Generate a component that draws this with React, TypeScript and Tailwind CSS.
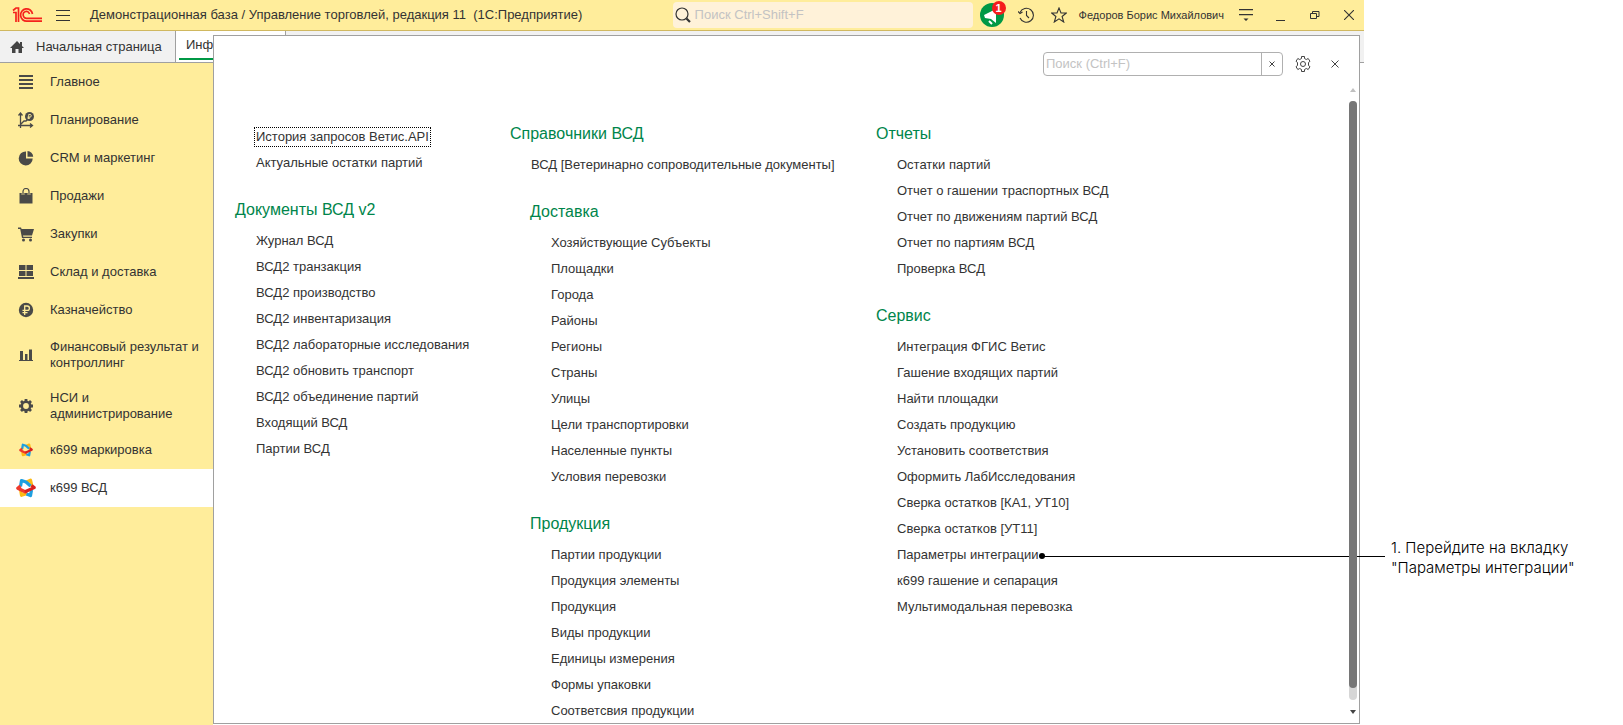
import React from "react";

type Group = { title?: string; items: string[]; sub?: boolean };

const columns: Group[][] = [
  [
    { items: ["История запросов Ветис.API", "Актуальные остатки партий"] },
    {
      title: "Документы ВСД v2",
      items: [
        "Журнал ВСД", "ВСД2 транзакция", "ВСД2 производство", "ВСД2 инвентаризация",
        "ВСД2 лабораторные исследования", "ВСД2 обновить транспорт",
        "ВСД2 объединение партий", "Входящий ВСД", "Партии ВСД",
      ],
    },
  ],
  [
    { title: "Справочники ВСД", items: ["ВСД [Ветеринарно сопроводительные документы]"] },
    {
      title: "Доставка", sub: true,
      items: [
        "Хозяйствующие Субъекты", "Площадки", "Города", "Районы", "Регионы", "Страны",
        "Улицы", "Цели транспортировки", "Населенные пункты", "Условия перевозки",
      ],
    },
    {
      title: "Продукция", sub: true,
      items: [
        "Партии продукции", "Продукция элементы", "Продукция", "Виды продукции",
        "Единицы измерения", "Формы упаковки", "Соответсвия продукции",
      ],
    },
  ],
  [
    {
      title: "Отчеты",
      items: [
        "Остатки партий", "Отчет о гашении траспортных ВСД", "Отчет по движениям партий ВСД",
        "Отчет по партиям ВСД", "Проверка ВСД",
      ],
    },
    {
      title: "Сервис",
      items: [
        "Интеграция ФГИС Ветис", "Гашение входящих партий", "Найти площадки",
        "Создать продукцию", "Установить соответствия", "Оформить ЛабИсследования",
        "Сверка остатков [КА1, УТ10]", "Сверка остатков [УТ11]", "Параметры интеграции",
        "к699 гашение и сепарация", "Мультимодальная перевозка",
      ],
    },
  ],
];

function Knot({ className }: { className: string }) {
  return (
    <svg viewBox="0 0 20 20" className={className} fill="none" strokeWidth="3.2" strokeLinejoin="round" aria-hidden="true">
      <path d="M9.500 4.500 14.500 2.200 16 8.500" stroke="#fdb913" />
      <path d="M4.500 11 5.500 17.300 11 15.500" stroke="#fdb913" />
      <path d="M4.500 8.500 5.500 2.500 10 4 14.500 8" stroke="#1e9fe0" />
      <path d="M10.500 16 14.500 17.600 15.500 12" stroke="#1e9fe0" />
      <path d="M4.500 8 1.800 10.200 9 13.800 11 13.500" stroke="#ee3a2c" />
      <path d="M9 13.800 18.200 9.600 15.500 7.500" stroke="#d9211f" />
    </svg>
  );
}

const svg = "size-4 shrink-0";
const icons = {
  main: <svg viewBox="0 0 16 16" className={svg} fill="#4a4a48"><path d="M1 1h14v2H1zM1 5h14v2H1zM1 9h14v2H1zM1 13h14v2H1z" /></svg>,
  plan: (
    <svg viewBox="0 0 16 16" className={svg} fill="none" stroke="#4a4a48">
      <path d="M2.500 16V1M.5 3.500l2-2.500 2 2.500M0 13.500h14M12 11.500l2.500 2-2.500 2M3 12l3-3h2l2-2" strokeWidth="1.300" />
      <circle cx="11.500" cy="4.500" r="4.500" fill="#4a4a48" stroke="none" />
      <path d="M10.700 7V2.500h1.300a1.300 1.300 0 0 1 0 2.600H9.500M9.500 6.200h2.500" stroke="#ffed9b" strokeWidth=".9" />
    </svg>
  ),
  pie: <svg viewBox="0 0 16 16" className={svg} fill="#4a4a48"><path d="M8 1.500V8.500H14.700A7 7 0 1 1 8 1.500ZM9.500 1a6 6 0 0 1 5.700 5.700H9.500Z" /></svg>,
  bag: <svg viewBox="0 0 16 16" className={svg}><path d="M1.500 5h13v10.500h-13z" fill="#4a4a48" /><path d="M5 7V3.500a3 3 0 0 1 6 0V7" fill="none" stroke="#ffed9b" strokeWidth="2.600" /><path d="M5 7V3.500a3 3 0 0 1 6 0V7" fill="none" stroke="#4a4a48" strokeWidth="1.200" /></svg>,
  cart: <svg viewBox="0 0 16 16" className={svg} fill="#4a4a48"><path d="M0 1.500h3l.6 1.500H16l-2 6.500H5l.3 1.200H14V12H4L2.200 3H0z" /><circle cx="5.500" cy="14" r="1.500" /><circle cx="12.500" cy="14" r="1.500" /></svg>,
  stock: <svg viewBox="0 0 16 16" className={svg} fill="#4a4a48"><path d="M1 1h6.500v5H1zM8.500 1H15v5H8.500zM1 7h6.500v5H1zM8.500 7H15v5H8.500zM0 13h16v2H0z" /></svg>,
  money: <svg viewBox="0 0 16 16" className={svg}><circle cx="8" cy="8" r="7.200" fill="#4a4a48" /><path d="M6.700 13V4h2.500a2.200 2.200 0 0 1 0 4.400H4.500M4.500 10.600h5" fill="none" stroke="#ffed9b" strokeWidth="1.300" /></svg>,
  bars: <svg viewBox="0 0 16 16" className={svg} fill="#4a4a48"><path d="M2 4h3v9H2zM7 7h2.500v6H7zM11 2.500h3V13h-3zM1 13h14v1H1z" /></svg>,
  gear: (
    <svg viewBox="0 0 16 16" className={svg} fill="none" stroke="#4a4a48">
      <circle cx="8" cy="8" r="4.200" strokeWidth="2.600" />
      <path d="M8 1v2M8 13v2M1 8h2M13 8h2M3 3l1.500 1.500M11.500 11.500 13 13M3 13l1.500-1.500M11.500 4.500 13 3" strokeWidth="2.800" />
    </svg>
  ),
};

const sections: { label: string; icon: React.ReactNode; tall?: boolean; active?: boolean }[] = [
  { label: "Главное", icon: icons.main },
  { label: "Планирование", icon: icons.plan },
  { label: "CRM и маркетинг", icon: icons.pie },
  { label: "Продажи", icon: icons.bag },
  { label: "Закупки", icon: icons.cart },
  { label: "Склад и доставка", icon: icons.stock },
  { label: "Казначейство", icon: icons.money },
  { label: "Финансовый результат и контроллинг", icon: icons.bars, tall: true },
  { label: "НСИ и администрирование", icon: icons.gear, tall: true },
  { label: "к699 маркировка", icon: <Knot className="size-3.5" /> },
  { label: "к699 ВСД", icon: <Knot className="size-5" />, active: true },
];

function TitleBar() {
  return (
    <header className="flex h-[31px] shrink-0 items-center border-b border-[#d0b860] bg-[#ffed9b] pr-2.5">
      <svg viewBox="0 0 30 16" className="ml-3 h-4 w-[30px] shrink-0" fill="none" stroke="#f5221c" strokeWidth="1.700" role="img" aria-label="1С">
        <path d="M1 5.500h3V15M1 3.500 4 1h2.500v14" />
        <path d="M20.500 7A6 6.200 0 1 0 15 14.200h15" />
        <path d="M17.500 7A3.200 3.500 0 1 0 15 11.300h15" />
      </svg>
      <button aria-label="Меню" className="ml-3.5 flex h-[11px] w-3.5 shrink-0 flex-col justify-between">
        <span className="h-px w-full bg-[#333]" /><span className="h-px w-full bg-[#333]" /><span className="h-px w-full bg-[#333]" />
      </button>
      <h1 className="ml-5 text-[13px] whitespace-pre">Демонстрационная база / Управление торговлей, редакция 11  (1С:Предприятие)</h1>
      <label className="ml-auto flex h-[26px] w-[300px] items-center rounded-sm bg-[#fff2d9] pl-0.5">
        <svg viewBox="0 0 16 16" className="size-4 shrink-0" fill="none" stroke="#333"><circle cx="7" cy="7" r="6" strokeWidth="1.200" /><path d="m11.500 11.500 3.500 3.500" strokeWidth="2.200" /></svg>
        <input aria-label="Поиск" placeholder="Поиск Ctrl+Shift+F" className="ml-1 min-w-0 flex-1 bg-transparent text-[13px] outline-none placeholder:text-[#c3c3c3]" />
      </label>
      <button aria-label="Уведомления" className="relative ml-[7px] size-6 shrink-0">
        <svg viewBox="0 0 24 24" className="size-6"><circle cx="12" cy="12" r="12" fill="#009845" /><path d="M4 12 16 6v14l-5-4-6-1z" fill="#fff" /><path d="m9 18 3 3" stroke="#fff" strokeWidth="2" /></svg>
        <span className="absolute -top-0.5 left-3 flex size-3.5 items-center justify-center rounded-full bg-[#f51c1c] text-[11px] font-bold text-white">1</span>
      </button>
      <button aria-label="История" className="ml-3.5 shrink-0">
        <svg viewBox="0 0 16 16" className="size-4" fill="none" stroke="#333" strokeWidth="1.100"><path d="M2 5.500A7 7 0 1 1 2 11M8.500 4v4.500l2.500 2.500" /><path d="m0 4.500 2 2 2.500-1.500" /></svg>
      </button>
      <button aria-label="Избранное" className="ml-[17px] shrink-0">
        <svg viewBox="0 0 16 16" className="size-4" fill="none" stroke="#333" strokeWidth="1.100"><path d="m8 1 2 5h5.300l-4.200 3.500 1.600 5.500L8 11.800 3.300 15l1.600-5.500L.7 6H6z" /></svg>
      </button>
      <span className="ml-3 text-[11px] whitespace-nowrap">Федоров Борис Михайлович</span>
      <button aria-label="Настройки окна" className="ml-[15px] shrink-0">
        <svg viewBox="0 0 14 14" className="size-3.5" fill="#333"><path d="M0 1h14v1.200H0zM0 6h14v1.200H0zM4.500 10.500h5L7 13z" /></svg>
      </button>
      <button aria-label="Свернуть" className="ml-[23px] flex h-3 w-[9px] shrink-0 items-end"><span className="h-px w-full bg-[#333]" /></button>
      <button aria-label="Развернуть" className="ml-[25px] shrink-0">
        <svg viewBox="0 0 10 10" className="size-2.5" fill="none" stroke="#333"><path d="M.5 3.500h6v5h-6zM2.500 3V1.500h6.500v5H7" /></svg>
      </button>
      <button aria-label="Закрыть" className="ml-6 shrink-0">
        <svg viewBox="0 0 10 10" className="size-2.5" stroke="#333" strokeWidth="1.100"><path d="m0 0 10 10M10 0 0 10" /></svg>
      </button>
    </header>
  );
}

function Sidebar() {
  return (
    <nav className="w-[213px] shrink-0 bg-[#ffed9b]">
      {sections.map((s) => (
        <a key={s.label} href="#" className={`flex items-center text-[13px] leading-4 ${s.tall ? "h-[51px]" : "h-[38px]"} ${s.active ? "bg-white" : ""}`}>
          <span className="flex w-[50px] shrink-0 justify-center pl-0.5">{s.icon}</span>
          <span className="pr-2">{s.label}</span>
        </a>
      ))}
    </nav>
  );
}

function MenuGroup({ group }: { group: Group }) {
  return (
    <section className={group.sub ? "pl-5" : ""}>
      {group.title && <h2 className="mb-2 text-[16px] leading-5 whitespace-nowrap text-[#00854b]">{group.title}</h2>}
      <ul className="pl-[21px]">
        {group.items.map((item) => (
          <li key={item} className="flex h-[26px] items-center whitespace-nowrap">
            {item === "История запросов Ветис.API" ? (
              <a href="#" className="-ml-0.5 border border-dotted border-black px-px leading-[18px]">{item}</a>
            ) : item === "Параметры интеграции" ? (
              <a href="#" className="relative">
                {item}
                <span className="absolute top-2 left-full flex w-[346px] items-center">
                  <span className="-mr-px size-1.5 shrink-0 rounded-full bg-black" />
                  <span className="h-px flex-1 bg-black" />
                </span>
              </a>
            ) : (
              <a href="#">{item}</a>
            )}
          </li>
        ))}
      </ul>
    </section>
  );
}

function FunctionsPanel() {
  return (
    <main className="absolute top-[35px] right-1 bottom-px left-[213px] border border-[#a0a0a0] bg-white">
      <div className="flex h-14 items-center justify-end pr-5">
        <div className="flex h-6 w-60 rounded-sm border border-[#b0b0b0]">
          <input aria-label="Поиск по меню" placeholder="Поиск (Ctrl+F)" className="min-w-0 flex-1 px-0.5 text-[13px] outline-none placeholder:text-[#c3c3c3]" />
          <button aria-label="Очистить" className="flex w-[21px] items-center justify-center border-l border-[#b0b0b0]">
            <svg viewBox="0 0 6 6" className="size-1.5" stroke="#444"><path d="m.5.5 5 5M5.500.5l-5 5" /></svg>
          </button>
        </div>
        <button aria-label="Настройки" className="ml-3">
          <svg viewBox="0 0 16 16" className="size-4" fill="none" stroke="#444" strokeLinejoin="round"><path d="M6.500.5h3v2l1.800 1 1.900-1 1.800 2.800L13.500 6.500v3l1.500 1.200-1.800 2.800-1.900-1-1.800 1v2h-3v-2l-1.800-1-1.900 1L1 10.700l1.500-1.200v-3L1 5.300l1.800-2.800 1.900 1 1.800-1z" /><circle cx="8" cy="8" r="2.500" /></svg>
        </button>
        <button aria-label="Закрыть панель" className="ml-5"><svg viewBox="0 0 8 8" className="size-2" stroke="#444"><path d="m.5.5 7 7M7.500.5l-7 7" /></svg></button>
      </div>
      <div className="flex items-start pt-8 pl-[21px] text-[13px]">
        {columns.map((groups, i) => (
          <div key={i} className={`flex shrink-0 flex-col gap-6 ${i === 0 ? "w-[275px]" : i === 1 ? "w-[366px]" : ""}`}>
            {groups.map((g, j) => <MenuGroup key={j} group={g} />)}
          </div>
        ))}
      </div>
      <div className="absolute top-[52px] right-0.5 bottom-[9px] flex w-2 flex-col items-center">
        <svg viewBox="0 0 6 4" className="h-1 w-1.5 shrink-0" fill="#c0c0c0"><path d="M0 4 3 0l3 4z" /></svg>
        <div className="mt-[9px] mb-2.5 w-full flex-1 rounded-full bg-[#d6d6d6]"><div className="h-[98%] rounded-full bg-[#767676]" /></div>
        <svg viewBox="0 0 6 4" className="h-1 w-1.5 shrink-0" fill="#444"><path d="M0 0h6L3 4z" /></svg>
      </div>
    </main>
  );
}

export default function App() {
  return (
    <div className="flex h-screen overflow-hidden bg-white font-['Liberation_Sans',Arial,sans-serif] text-[#333]">
      <div className="relative flex min-w-0 flex-1 flex-col">
        <TitleBar />
        <div className="flex h-8 shrink-0 border-b border-[#a0a0a0] bg-[#f1f1f1] text-[13px]">
          <a href="#" className="flex w-44 items-center border-r border-[#a0a0a0] pl-2.5">
            <svg viewBox="0 0 14 12" className="h-3 w-3.5" fill="#444"><path d="M7 0 0 7h2v5h3.500V8h3v4H12V7h2l-2-2V1h-2v2z" /></svg>
            <span className="ml-3">Начальная страница</span>
          </a>
          <a href="#" className="flex w-[110px] flex-col border-r border-[#a0a0a0] bg-white px-[3px] pb-0.5">
            <span className="flex flex-1 items-center border-b-2 border-[#009845] pl-[7px]">Информация</span>
          </a>
        </div>
        <div className="flex min-h-0 flex-1"><Sidebar /></div>
        <FunctionsPanel />
      </div>
      <aside className="flex w-[259px] shrink-0 flex-col pt-[538px] pl-[27px] font-['Inter',sans-serif] text-[15px] leading-5 font-light text-black">
        <p>1. Перейдите на вкладку<br />"Параметры интеграции"</p>
      </aside>
    </div>
  );
}
